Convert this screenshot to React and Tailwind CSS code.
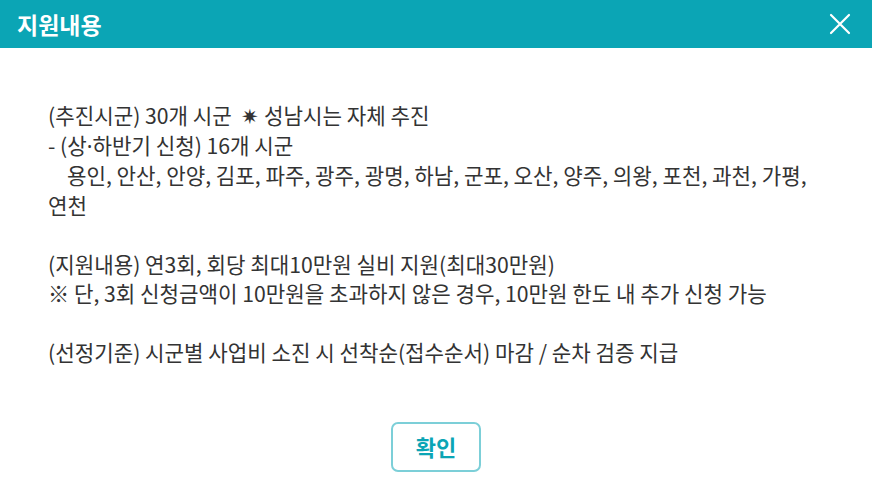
export default function App() {
  const font = { fontFamily: '"Noto Sans CJK KR", "Noto Sans", sans-serif' };
  return (
    <div className="w-[872px] h-[493px] bg-white flex flex-col" style={font}>
      <div className="h-[48px] bg-[#0ba5b5] flex items-center justify-between pl-[17px] pr-[20px] shrink-0">
        <h1 className="text-white text-[23px] font-bold leading-none">지원내용</h1>
        <button className="w-[24px] h-[24px] flex items-center justify-center">
          <svg width="22" height="22" viewBox="0 0 22 22" fill="none" stroke="white" strokeWidth="2.2" strokeLinecap="round">
            <path d="M2 2 L20 20 M20 2 L2 20" />
          </svg>
        </button>
      </div>
      <div className="pt-[52px] pl-[48px] text-[21.2px] leading-[29.5px] text-[#333333]">
        <p>(추진시군) 30개 시군&nbsp;&nbsp;✷ 성남시는 자체 추진</p>
        <p>
          - (상<span className="font-['Noto_Sans']">·</span>하반기 신청) 16개 시군
        </p>
        <p>&nbsp;&nbsp;&nbsp;&nbsp;용인, 안산, 안양, 김포, 파주, 광주, 광명, 하남, 군포, 오산, 양주, 의왕, 포천, 과천, 가평,</p>
        <p>연천</p>
        <p>&nbsp;</p>
        <p>(지원내용) 연3회, 회당 최대10만원 실비 지원(최대30만원)</p>
        <p>※ 단, 3회 신청금액이 10만원을 초과하지 않은 경우, 10만원 한도 내 추가 신청 가능</p>
        <p>&nbsp;</p>
        <p>(선정기준) 시군별 사업비 소진 시 선착순(접수순서) 마감 / 순차 검증 지급</p>
      </div>
      <div className="flex justify-center mt-[55px]">
        <button className="w-[90px] h-[50px] border-2 border-[#7ccfd8] rounded-[7px] text-[#0ba5b5] text-[22px] font-bold">
          확인
        </button>
      </div>
    </div>
  );
}
